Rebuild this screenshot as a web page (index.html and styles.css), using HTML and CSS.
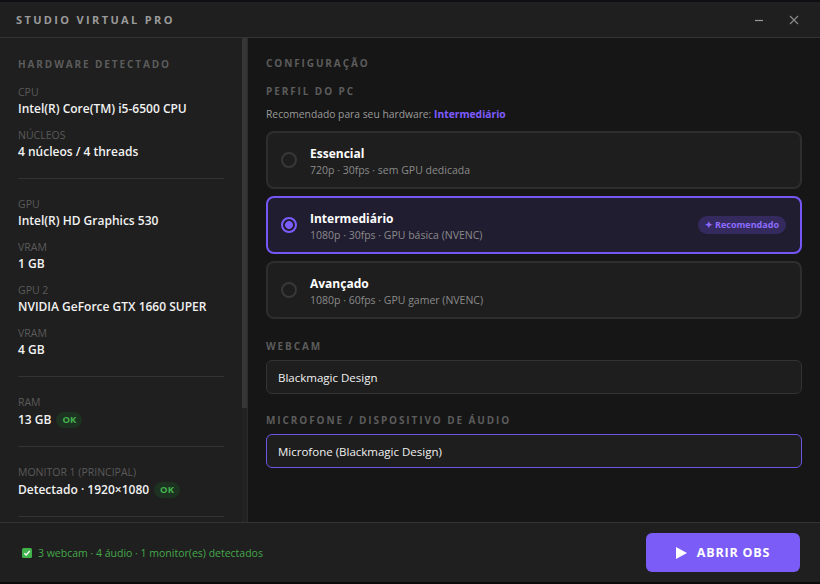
FILE: index.html
```html
<!DOCTYPE html>
<html lang="pt-BR">
<head>
<meta charset="utf-8">
<title>Studio Virtual Pro</title>
<link rel="stylesheet" href="styles.css">
</head>
<body>
<div class="app">
  <div class="edge-top"></div>
  <header class="titlebar">
    <div class="app-title">STUDIO VIRTUAL PRO</div>
    <div class="win-ctrls">
      <span class="win-btn min"><svg width="10" height="10" viewBox="0 0 10 10"><path d="M1 5.5h8" stroke="#9a9a9a" stroke-width="1.2"/></svg></span>
      <span class="win-btn close"><svg width="10" height="10" viewBox="0 0 10 10"><path d="M1 1l8 8M9 1l-8 8" stroke="#8a8a8a" stroke-width="1.2"/></svg></span>
    </div>
  </header>
  <div class="body">
    <aside class="sidebar">
      <div class="side-inner">
        <div class="sec-title">HARDWARE DETECTADO</div>
        <div class="group first">
          <div class="item"><div class="lbl">CPU</div><div class="val">Intel(R) Core(TM) i5-6500 CPU</div></div>
          <div class="item"><div class="lbl">NÚCLEOS</div><div class="val">4 núcleos / 4 threads</div></div>
        </div>
        <div class="group">
          <div class="item"><div class="lbl">GPU</div><div class="val">Intel(R) HD Graphics 530</div></div>
          <div class="item"><div class="lbl">VRAM</div><div class="val">1 GB</div></div>
          <div class="item"><div class="lbl">GPU 2</div><div class="val">NVIDIA GeForce GTX 1660 SUPER</div></div>
          <div class="item"><div class="lbl">VRAM</div><div class="val">4 GB</div></div>
        </div>
        <div class="group">
          <div class="item"><div class="lbl">RAM</div><div class="val has-ok">13 GB <span class="ok">OK</span></div></div>
        </div>
        <div class="group">
          <div class="item"><div class="lbl">MONITOR 1 (PRINCIPAL)</div><div class="val has-ok">Detectado · 1920×1080 <span class="ok">OK</span></div></div>
        </div>
      </div>
      <div class="scroll-track"><div class="scroll-thumb"></div></div>
    </aside>
    <main class="main">
      <div class="sec-title">CONFIGURAÇÃO</div>
      <div class="sub-title">PERFIL DO PC</div>
      <div class="rec">Recomendado para seu hardware: <strong>Intermediário</strong></div>
      <div class="cards">
        <div class="card">
          <span class="radio"></span>
          <div class="card-text"><div class="card-name">Essencial</div><div class="card-desc">720p · 30fps · sem GPU dedicada</div></div>
        </div>
        <div class="card selected">
          <span class="radio on"></span>
          <div class="card-text"><div class="card-name">Intermediário</div><div class="card-desc">1080p · 30fps · GPU básica (NVENC)</div></div>
          <span class="badge">✦ Recomendado</span>
        </div>
        <div class="card">
          <span class="radio"></span>
          <div class="card-text"><div class="card-name">Avançado</div><div class="card-desc">1080p · 60fps · GPU gamer (NVENC)</div></div>
        </div>
      </div>
      <div class="sub-title field-lbl">WEBCAM</div>
      <div class="select">Blackmagic Design</div>
      <div class="sub-title field-lbl second">MICROFONE / DISPOSITIVO DE ÁUDIO</div>
      <div class="select focus">Microfone (Blackmagic Design)</div>
    </main>
  </div>
  <footer class="footer">
    <div class="status"><span class="chk"><svg width="10" height="10" viewBox="0 0 10 10"><rect width="10" height="10" rx="1.5" fill="#3fb04a"/><path d="M2.3 5.2l1.8 1.8 3.7-4" stroke="#fff" stroke-width="1.3" fill="none"/></svg></span>3 webcam · 4 áudio · 1 monitor(es) detectados</div>
    <button class="go"><svg width="11" height="12" viewBox="0 0 11 12"><path d="M0 0l11 6-11 6z" fill="#fff"/></svg>ABRIR OBS</button>
  </footer>
  <div class="edge-bottom"></div>
</div>
</body>
</html>
```
FILE: styles.css
```css
* { box-sizing: border-box; }
html, body { margin: 0; padding: 0; }
body {
  width: 820px;
  height: 584px;
  overflow: hidden;
  background: #161616;
  font-family: "Open Sans", "Noto Sans", sans-serif;
  color: #eaeaea;
}
.app {
  display: flex;
  flex-direction: column;
  height: 584px;
}
.edge-top { height: 2px; background: #0e1014; flex: none; }
.edge-bottom { height: 2px; background: #0a0a0a; flex: none; }
.titlebar {
  height: 36px;
  flex: none;
  background: #1f1f1f;
  border-bottom: 1px solid #333;
  display: flex;
  align-items: center;
  justify-content: space-between;
  padding: 0 21px 0 16px;
}
.app-title {
  font-size: 11px;
  font-weight: 700;
  letter-spacing: 2.35px;
  color: #9a9a9a;
}
.win-ctrls { display: flex; align-items: center; gap: 25px; }
.win-btn { display: flex; width: 10px; height: 10px; align-items: center; justify-content: center; }
.body {
  flex: 1;
  display: flex;
  min-height: 0;
}
.sidebar {
  width: 248px;
  flex: none;
  background: #1f1f1f;
  border-right: 1px solid #2c2c2c;
  display: flex;
  overflow: hidden;
}
.side-inner {
  flex: 1;
  min-width: 0;
  padding: 19px 18px 0 18px;
  overflow: hidden;
}
.scroll-track {
  width: 5px;
  flex: none;
  background: #222;
}
.scroll-thumb {
  height: 370px;
  background: #363636;
}
.sec-title {
  font-size: 10px;
  font-weight: 700;
  letter-spacing: 1.9px;
  color: #5c5c5c;
  line-height: 14px;
}
.main .sec-title { margin-top: -1px; }
.group {
  padding: 17px 0 8px;
  border-bottom: 1px solid #333;
}
.group.first { padding-top: 13px; }
.item { margin-bottom: 9px; }
.lbl {
  font-size: 10.5px;
  height: 16px;
  line-height: 16px;
  color: #5a5a5a;
}
.val {
  font-size: 12px;
  font-weight: 600;
  height: 18px;
  line-height: 18px;
  color: #f2f2f2;
  display: flex;
  align-items: center;
  white-space: nowrap;
}
.val.has-ok { height: 19px; }
.ok {
  margin-left: 5px;
  height: 16px;
  padding: 0 6px;
  border-radius: 8px;
  background: #1d3221;
  color: #44b24e;
  font-size: 9.5px;
  font-weight: 700;
  line-height: 16px;
}
.main {
  flex: 1;
  padding: 19px 18px 0 18px;
}
.sub-title {
  font-size: 10px;
  font-weight: 700;
  letter-spacing: 1.9px;
  color: #5c5c5c;
  line-height: 14px;
  margin-top: 14px;
}
.rec {
  margin-top: 8px;
  font-size: 10.3px;
  line-height: 16px;
  color: #9a9a9a;
}
.rec strong { color: #7e5cff; font-weight: 700; }
.cards {
  margin-top: 9px;
  display: flex;
  flex-direction: column;
  gap: 7px;
}
.card {
  height: 58px;
  display: flex;
  align-items: center;
  padding: 0 14px 0 13px;
  border: 2px solid #2e2e2e;
  border-radius: 8px;
  background: #1e1e1e;
}
.card.selected {
  border-color: #7657f5;
  background: #211d30;
}
.radio {
  width: 16px;
  height: 16px;
  border-radius: 50%;
  border: 2px solid #383838;
  flex: none;
  margin-right: 13px;
}
.radio.on {
  border-color: #7b5cff;
  background: radial-gradient(circle, #7b5cff 0 3.6px, transparent 4.2px);
}
.card-text { flex: 1; padding-top: 2px; }
.card-name {
  font-size: 12px;
  font-weight: 700;
  line-height: 17px;
  color: #ffffff;
}
.card-desc {
  margin-top: 1px;
  font-size: 10.5px;
  line-height: 15px;
  color: #8a8a8a;
}
.badge {
  height: 18px;
  padding: 0 7px;
  border-radius: 9px;
  background: #352a5e;
  color: #8d6cff;
  font-size: 9px;
  font-weight: 700;
  line-height: 18px;
}
.field-lbl { margin-top: 20px; }
.field-lbl.second { margin-top: 19px; }
.select {
  margin-top: 7px;
  height: 34px;
  display: flex;
  align-items: center;
  padding: 0 11px;
  background: #1e1e1e;
  border: 1px solid #333;
  border-radius: 6px;
  font-size: 11.5px;
  color: #f0f0f0;
}
.select.focus { border-color: #6f55e6; }
.footer {
  height: 60px;
  flex: none;
  background: #1f1f1f;
  border-top: 1px solid #333;
  display: flex;
  align-items: center;
  justify-content: space-between;
  padding: 0 20px 0 22px;
}
.status {
  display: flex;
  align-items: center;
  font-size: 10.5px;
  color: #45a84b;
  padding-top: 1px;
}
.chk { display: flex; margin-right: 6px; }
.go {
  width: 154px;
  height: 39px;
  border: 0;
  border-radius: 6px;
  background: #7b5cf7;
  color: #fff;
  font-family: inherit;
  font-size: 12.5px;
  font-weight: 700;
  letter-spacing: 0.8px;
  display: flex;
  align-items: center;
  justify-content: center;
  gap: 10px;
}
```
